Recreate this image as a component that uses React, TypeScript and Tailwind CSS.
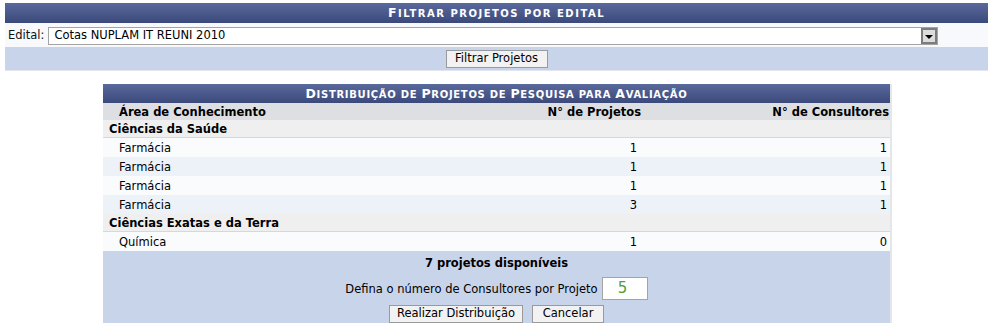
import React from 'react';

const rows = [
  { grupo: 'Ciências da Saúde', itens: [
    { area: 'Farmácia', projetos: 1, consultores: 1 },
    { area: 'Farmácia', projetos: 1, consultores: 1 },
    { area: 'Farmácia', projetos: 1, consultores: 1 },
    { area: 'Farmácia', projetos: 3, consultores: 1 },
  ] },
  { grupo: 'Ciências Exatas e da Terra', itens: [
    { area: 'Química', projetos: 1, consultores: 0 },
  ] },
];

// small-caps feito à mão: palavras [inicial grande?, texto]
function Caption({ words, className = '' }: { words: [boolean, string][]; className?: string }) {
  return (
    <div className={`h-[19px] flex items-center justify-center pt-[1px] bg-gradient-to-b from-[#5a699b] to-[#3b497b] text-white font-bold ${className}`}>
      <span className="uppercase text-[10px] leading-none">
        {words.map(([big, w], i) => (
          <React.Fragment key={i}>
            {i > 0 && ' '}
            {big ? <span className="text-[12.5px]">{w[0]}</span> : w[0]}
            {w.slice(1)}
          </React.Fragment>
        ))}
      </span>
    </div>
  );
}

function Botao({ children, className = '' }: { children: React.ReactNode; className?: string }) {
  return (
    <button className={`h-[18px] px-[6px] bg-[#f2f2f2] border border-[#9a9a9a] text-[11.5px] leading-none text-black ${className}`}>
      {children}
    </button>
  );
}

export default function App() {
  let idx = 0;
  return (
    <div className="w-[993px] h-[329px] bg-white text-[11.5px] text-black overflow-hidden" style={{ fontFamily: '"DejaVu Sans", Verdana, sans-serif' }}>
      {/* filtro */}
      <div className="ml-[5px] mt-[3px] w-[983px] border-b border-[#e2e5ee]">
        <Caption
          className="h-[20px] tracking-[1.5px]"
          words={[[true, 'Filtrar'], [false, 'projetos'], [false, 'por'], [false, 'edital']]}
        />
        <div className="h-[24px] bg-[#f8f9fc] flex items-center pt-[2px]">
          <span className="ml-[3px] text-[#111]">Edital:</span>
          <div className="ml-[4px] w-[890px] h-[18px] border border-[#a4a4a4] bg-white flex items-center justify-between">
            <span className="pl-[5px]">Cotas NUPLAM IT REUNI 2010</span>
            <div className="w-[16px] h-[16px] border-2 border-[#7c7c7c] bg-[#dcdcdc] flex items-center justify-center">
              <div className="w-0 h-0 border-l-[4px] border-r-[4px] border-t-[4px] border-l-transparent border-r-transparent border-t-black mt-[2px]" />
            </div>
          </div>
        </div>
        <div className="h-[23px] bg-[#c8d4ea] flex items-center justify-center">
          <Botao className="w-[102px]">Filtrar Projetos</Botao>
        </div>
      </div>

      {/* distribuicao */}
      <div className="ml-[103px] mt-[13px] w-[789px] border-r-2 border-[#e4e6ea]">
        <Caption
          className="tracking-[0.7px]"
          words={[[true, 'Distribuição'], [false, 'de'], [true, 'Projetos'], [false, 'de'], [true, 'Pesquisa'], [false, 'para'], [true, 'Avaliação']]}
        />
        <div className="h-[17px] bg-[#dedfe3] flex items-center pt-[2px] font-bold">
          <div className="w-[300px] pl-[16px]">Área de Conhecimento</div>
          <div className="w-[238px] text-right">N° de Projetos</div>
          <div className="flex-1 text-right pr-[1px]">N° de Consultores</div>
        </div>
        {rows.map((g) => (
          <div key={g.grupo}>
            <div className="h-[18px] bg-[#efefef] border-b border-[#d8d8d8] flex items-center pt-[3px] font-bold pl-[6px]">
              {g.grupo}
            </div>
            {g.itens.map((it, i) => {
              const par = idx++ % 2 === 1;
              return (
                <div key={i} className={`h-[19px] flex items-center pt-[3px] ${par ? 'bg-[#edf1f8]' : 'bg-[#f9fbfd]'}`}>
                  <div className="w-[300px] pl-[16px]">{it.area}</div>
                  <div className="w-[238px] text-right pr-[4px]">{it.projetos}</div>
                  <div className="flex-1 text-right pr-[3px]">{it.consultores}</div>
                </div>
              );
            })}
          </div>
        ))}
        <div className="h-[72px] bg-[#c8d4ea] flex flex-col items-center pt-[5px]">
          <div className="font-bold h-[14px] leading-[14px]">7 projetos disponíveis</div>
          <div className="flex items-center mt-[7px] h-[23px]">
            <span className="pt-[2px]">Defina o número de Consultores por Projeto</span>
            <div className="ml-[4px] w-[46px] h-[23px] bg-white border border-[#a4a4a4] flex items-center pl-[15px] text-[15px] text-[#52a030]">
              5
            </div>
          </div>
          <div className="flex gap-[9px] mt-[5px]">
            <Botao className="w-[134px]">Realizar Distribuição</Botao>
            <Botao className="w-[72px]">Cancelar</Botao>
          </div>
        </div>
      </div>
    </div>
  );
}
